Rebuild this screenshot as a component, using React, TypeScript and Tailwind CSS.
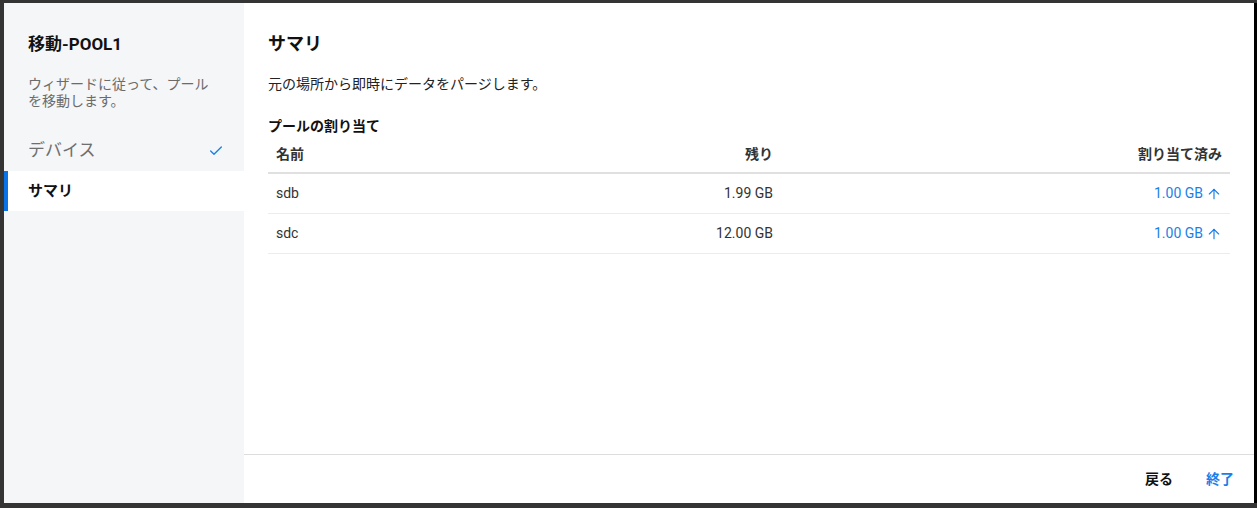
import { Check, ArrowUp } from 'lucide-react';

const FONT = 'font-[Roboto,"Noto_Sans_CJK_JP",sans-serif]';

const rows = [
  { name: 'sdb', free: '1.99 GB', alloc: '1.00 GB' },
  { name: 'sdc', free: '12.00 GB', alloc: '1.00 GB' },
];

export default function App() {
  return (
    <div className={`h-[508px] w-[1257px] bg-[#343434] pt-[3px] pl-[4px] ${FONT}`}>
      <div className="flex h-[500px] w-[1253px]">
        {/* Sidebar */}
        <div className="flex w-[240px] flex-col bg-[#f5f6f8]">
          <div className="px-6 pt-[29px] text-[17px] font-bold leading-6 text-[#111]">移動-POOL1</div>
          <div className="px-6 pt-[20px] text-[14px] leading-[17px] text-[#6b6b6b]">
            ウィザードに従って、プール
            <br />
            を移動します。
          </div>
          <div className="mt-[21px] flex h-10 items-center justify-between pl-6 pr-[20px] text-[17px] text-[#6f6f6f]">
            <span>デバイス</span>
            <Check className="h-4 w-4 text-[#1a7fe8]" strokeWidth={2} />
          </div>
          <div className="flex h-10 items-center border-l-4 border-[#0a72e8] bg-white pl-5 text-[15px] font-bold text-[#111]">
            サマリ
          </div>
        </div>

        {/* Main */}
        <div className="flex flex-1 flex-col bg-white">
          <div className="flex-1 px-6 pt-[29px]">
            <div className="text-[18px] font-bold leading-6 text-[#111]">サマリ</div>
            <div className="pt-[18px] text-[14px] leading-5 text-[#222]">元の場所から即時にデータをパージします。</div>
            <div className="pt-[22px] text-[14px] font-bold leading-5 text-[#111]">プールの割り当て</div>
            <div className="w-[962px]">
              <div className="flex h-[38px] items-center border-b-2 border-[#e0e0e0] text-[14px] font-bold text-[#333]">
                <div className="w-[256px] px-2">名前</div>
                <div className="w-[257px] px-2 text-right">残り</div>
                <div className="flex-1 px-2 text-right">割り当て済み</div>
              </div>
              {rows.map((r) => (
                <div key={r.name} className="flex h-10 items-center border-b border-[#ececec] text-[14px] text-[#333]">
                  <div className="w-[256px] px-2">{r.name}</div>
                  <div className="w-[257px] px-2 text-right">{r.free}</div>
                  <div className="flex flex-1 items-center justify-end gap-[3px] px-2 text-[#1a7fe8]">
                    <span>{r.alloc}</span>
                    <ArrowUp className="h-4 w-4" strokeWidth={1.75} />
                  </div>
                </div>
              ))}
            </div>
          </div>
          <div className="flex h-[49px] items-center justify-end gap-[33px] border-t border-[#dddddd] pr-[20px] text-[14px] font-bold">
            <button className="text-[#111]">戻る</button>
            <button className="text-[#1a7fe8]">終了</button>
          </div>
        </div>
        <div className="w-[3px] bg-black" />
      </div>
    </div>
  );
}
